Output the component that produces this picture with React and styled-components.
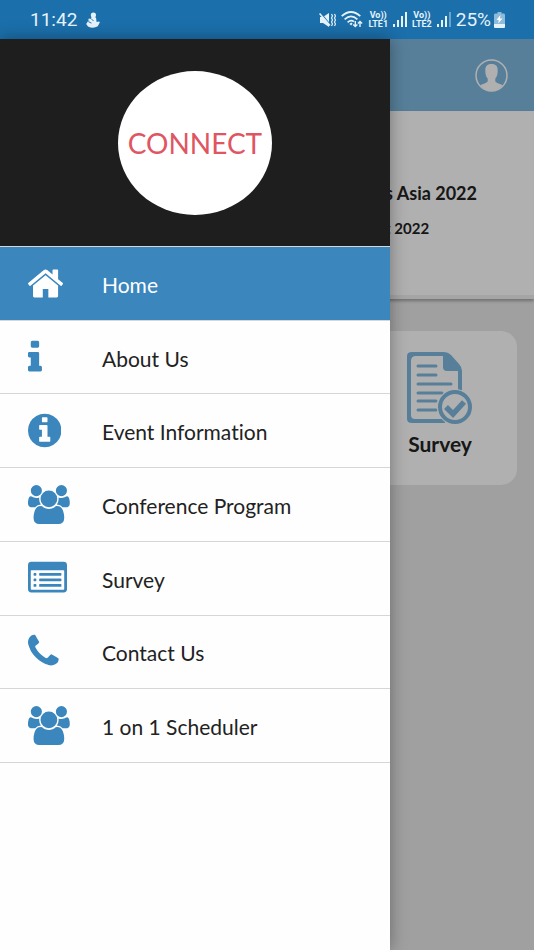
import { createGlobalStyle, styled } from "styled-components";

const GlobalStyle = createGlobalStyle`
  * {
    box-sizing: border-box;
  }

  body {
    margin: 0;
    font-family: Lato, "Liberation Sans", sans-serif;
    font-variant-ligatures: none;
    color: #222;
  }
`;

const Container = styled.div`
  display: flex;
  flex-direction: column;
  min-height: 100vh;
  background: #e8e8e8;
`;

// status bar
const StatusBar = styled.header`
  display: flex;
  align-items: center;
  justify-content: space-between;
  height: 39px;
  padding: 0 29px 0 30px;
  background: #1b6fab;
  color: #e6f3fb;
  font-family: Roboto, sans-serif;
  font-size: 19px;
`;

const StatusGroup = styled.div`
  display: flex;
  align-items: center;
  gap: ${(props) => props.$gap}px;
`;

const Carrier = styled.span`
  display: flex;
  flex-direction: column;
  align-items: center;
  font-size: 9px;
  line-height: 9px;
  font-weight: 700;
`;

// page behind the drawer
const Screen = styled.div`
  position: relative;
  flex: 1;
  display: flex;
  flex-direction: column;
`;

const AppBar = styled.div`
  display: flex;
  align-items: center;
  justify-content: flex-end;
  height: 72px;
  padding-right: 26px;
  background: #7eb8e0;
`;

const IconButton = styled.button`
  display: flex;
  padding: 0;
  border: 0;
  background: none;
`;

const Hero = styled.section`
  display: flex;
  justify-content: flex-end;
  height: 188px;
  padding: 70px 57px 0 0;
  background: #fff;
  border-bottom: 4px solid #f0f0f0;
  box-shadow: 0 2px 3px rgba(0, 0, 0, 0.3);
`;

const HeroTitle = styled.h1`
  margin: 0;
  font-size: 18px;
  line-height: 24px;
`;

const HeroDate = styled.p`
  margin: 11px 0 0;
  font-size: 15px;
  line-height: 24px;
  font-weight: 700;
`;

const TileGrid = styled.div`
  display: grid;
  grid-template-columns: repeat(3, 1fr);
  gap: 19px;
  padding: 32px 17px;
`;

const Tile = styled.a`
  grid-column: 3;
  display: flex;
  flex-direction: column;
  align-items: center;
  gap: 5px;
  height: 154px;
  padding-top: 21px;
  border-radius: 16px;
  background: #fff;
  color: #222;
  font-size: 21px;
  line-height: 28px;
  font-weight: 700;
  text-decoration: none;
`;

const Backdrop = styled.div`
  position: absolute;
  inset: 0;
  background: rgba(0, 0, 0, 0.31);
`;

// drawer
const Drawer = styled.aside`
  position: absolute;
  top: 0;
  bottom: 0;
  left: 0;
  width: 73%;
  background: #fefefe;
  box-shadow: 0 0 16px rgba(0, 0, 0, 0.35);
`;

const DrawerTop = styled.div`
  display: flex;
  align-items: center;
  justify-content: center;
  height: 208px;
  background: #1e1e1e;
  border-bottom: 1px solid #d8d8d8;
`;

const Logo = styled.div`
  display: flex;
  align-items: center;
  justify-content: center;
  width: 154px;
  height: 144px;
  border-radius: 50%;
  background: #fff;
  color: #e05562;
  font-size: 28px;
`;

const Menu = styled.nav`
  display: grid;
  grid-auto-rows: 1fr;
  height: 516px;
`;

const MenuItem = styled.a`
  display: grid;
  grid-template-columns: 74px 1fr;
  align-items: center;
  padding-left: 28px;
  border-bottom: 1px solid #d6d6d6;
  background: ${(props) => (props.$active ? "#3a86bd" : "transparent")};
  color: ${(props) => (props.$active ? "#fff" : "#222")};
  font-size: 21px;
  text-decoration: none;

  svg {
    display: block;
    height: 39px;
    fill: ${(props) => (props.$active ? "#fff" : "#3a86bd")};
  }
`;

const MenuLabel = styled.span`
  padding-top: 2px;
`;

const icons = {
  home: {
    box: "89 0 1614 1792",
    d: "M1472 992v480q0 26-19 45t-45 19h-384v-384h-256v384h-384q-26 0-45-19t-19-45v-480q0-1 .5-3t.5-3l575-474 575 474q1 2 1 6zm223-69l-62 74q-8 9-21 11h-3q-13 0-21-7l-692-577-692 577q-12 8-24 7-13-2-21-11l-62-74q-8-10-7-23.5t11-21.5l719-599q32-26 76-26t76 26l244 204v-195q0-14 9-23t23-9h192q14 0 23 9t9 23v408l219 182q10 8 11 21.5t-7 23.5z",
  },
  info: {
    box: "576 0 640 1792",
    d: "M1216 1344v128q0 26-19 45t-45 19h-512q-26 0-45-19t-19-45v-128q0-26 19-45t45-19h64v-384h-64q-26 0-45-19t-19-45v-128q0-26 19-45t45-19h384q26 0 45 19t19 45v576h64q26 0 45 19t19 45zm-128-1152v192q0 26-19 45t-45 19h-256q-26 0-45-19t-19-45v-192q0-26 19-45t45-19h256q26 0 45 19t19 45z",
  },
  infoCircle: {
    box: "128 0 1536 1792",
    d: "M1152 1376v-160q0-14-9-23t-23-9h-96v-512q0-14-9-23t-23-9h-320q-14 0-23 9t-9 23v160q0 14 9 23t23 9h96v320h-96q-14 0-23 9t-9 23v160q0 14 9 23t23 9h448q14 0 23-9t9-23zm-128-896v-160q0-14-9-23t-23-9h-192q-14 0-23 9t-9 23v160q0 14 9 23t23 9h192q14 0 23-9t9-23zm640 416q0 209-103 385.5t-279.5 279.5-385.5 103-385.5-103-279.5-279.5-103-385.5 103-385.5 279.5-279.5 385.5-103 385.5 103 279.5 279.5 103 385.5z",
  },
  users: {
    box: "0 0 1920 1792",
    d: "M593 896q-162 5-265 128h-134q-82 0-138-40.5t-56-118.5q0-353 124-353 6 0 43.5 21t97.5 42.5 119 21.5q67 0 133-23-5 37-5 66 0 139 81 256zm1071 637q0 120-73 189.5t-194 69.5h-874q-121 0-194-69.5t-73-189.5q0-53 3.5-103.5t14-109 26.5-108.5 43-97.5 62-81 85.5-53.5 111.5-20q10 0 43 21.5t73 48 107 48 135 21.5 135-21.5 107-48 73-48 43-21.5q61 0 111.5 20t85.5 53.5 62 81 43 97.5 26.5 108.5 14 109 3.5 103.5zm-1024-1277q0 106-75 181t-181 75-181-75-75-181 75-181 181-75 181 75 75 181zm704 384q0 159-112.5 271.5t-271.5 112.5-271.5-112.5-112.5-271.5 112.5-271.5 271.5-112.5 271.5 112.5 112.5 271.5zm576 225q0 78-56 118.5t-138 40.5h-134q-103-123-265-128 81-117 81-256 0-29-5-66 66 23 133 23 59 0 119-21.5t97.5-42.5 43.5-21q124 0 124 353zm-128-609q0 106-75 181t-181 75-181-75-75-181 75-181 181-75 181 75 75 181z",
  },
  list: {
    box: "0 0 1792 1792",
    d: "M160 128h1472a160 160 0 0 1 160 160v1088a160 160 0 0 1-160 160h-1472a160 160 0 0 1-160-160v-1088a160 160 0 0 1 160-160zM160 512a32 32 0 0 0-32 32v832a32 32 0 0 0 32 32h1472a32 32 0 0 0 32-32v-832a32 32 0 0 0-32-32zM288 640h64a32 32 0 0 1 32 32v64a32 32 0 0 1-32 32h-64a32 32 0 0 1-32-32v-64a32 32 0 0 1 32-32zM288 896h64a32 32 0 0 1 32 32v64a32 32 0 0 1-32 32h-64a32 32 0 0 1-32-32v-64a32 32 0 0 1 32-32zM288 1152h64a32 32 0 0 1 32 32v64a32 32 0 0 1-32 32h-64a32 32 0 0 1-32-32v-64a32 32 0 0 1 32-32zM544 640h960a32 32 0 0 1 32 32v64a32 32 0 0 1-32 32h-960a32 32 0 0 1-32-32v-64a32 32 0 0 1 32-32zM544 896h960a32 32 0 0 1 32 32v64a32 32 0 0 1-32 32h-960a32 32 0 0 1-32-32v-64a32 32 0 0 1 32-32zM544 1152h960a32 32 0 0 1 32 32v64a32 32 0 0 1-32 32h-960a32 32 0 0 1-32-32v-64a32 32 0 0 1 32-32z",
  },
  phone: {
    box: "192 0 1408 1792",
    d: "M1600 1240q0 27-10 70.5t-21 68.5q-21 50-122 106-94 51-186 51-27 0-53-3.5t-57.5-12.5-47-14.5-55.5-20.5-49-18q-98-35-175-83-127-79-264-216t-216-264q-48-77-83-175-3-9-18-49t-20.5-55.5-14.5-47-12.5-57.5-3.5-53q0-92 51-186 56-101 106-122 25-11 68.5-21t70.5-10q14 0 21 3 18 6 53 76 11 19 30 54t35 63.5 31 53.5q3 4 17.5 25t21.5 35.5 7 28.5q0 20-28.5 50t-62 55-62 53-28.5 46q0 9 5 22.5t8.5 20.5 14 24 11.5 19q76 137 174 235t235 174q2 1 19 11.5t24 14 20.5 8.5 22.5 5q18 0 46-28.5t53-62 55-62 50-28.5q14 0 28.5 7t35.5 21.5 25 17.5q25 15 53.5 31t63.5 35 54 30q70 35 76 53 3 7 3 21z",
  },
};

const menu = [
  { label: "Home", icon: "home", active: true },
  { label: "About Us", icon: "info" },
  { label: "Event Information", icon: "infoCircle" },
  { label: "Conference Program", icon: "users" },
  { label: "Survey", icon: "list" },
  { label: "Contact Us", icon: "phone" },
  { label: "1 on 1 Scheduler", icon: "users" },
];

const MenuIcon = ({ name }) => (
  <svg viewBox={icons[name].box} aria-hidden="true">
    <path fillRule="evenodd" d={icons[name].d} />
  </svg>
);

const FigureIcon = () => (
  <svg width="14" height="16" viewBox="0 0 14 16" fill="currentColor" aria-hidden="true">
    <circle cx="7.4" cy="3" r="2.6" />
    <path d="M5.5 4.5L10 5.5l.6 4.5 2.6-.6.6 1.2-2 3.6Q7 17 2 14.4L.2 12l1.6-2.4 2-.4-1.6-1 .6-1.6 2.4.4z" />
    <path d="M2.5 9.8l3 1.3M5.5 7.5l2 1" stroke="#1b6fab" strokeWidth="0.9" />
  </svg>
);

const MuteIcon = () => (
  <svg width="17" height="16" viewBox="0 0 17 16" aria-hidden="true">
    <path d="M1 5h3l6-4v14l-6-4H1z" fill="currentColor" />
    <path d="M1.5 1l10 12" stroke="#1b6fab" strokeWidth="1.2" />
    <path d="M.6 1.4L11 13.5" stroke="currentColor" strokeWidth="1.5" />
    <path
      d="M12.5 2l1 2-1 2 1 2-1 2 1 2-1 2M15.5 2l1 2-1 2 1 2-1 2 1 2-1 2"
      fill="none"
      stroke="currentColor"
      strokeWidth="1.2"
    />
  </svg>
);

const WifiIcon = () => (
  <svg width="22" height="17" viewBox="0 0 22 17" fill="none" stroke="currentColor" aria-hidden="true">
    <path d="M.7 5.2Q10 -3.2 19.3 5.2M3.6 8.3Q10 2.6 16.4 8.3M6.6 11.3Q10 8.4 13 10.6" strokeWidth="1.7" />
    <path d="M8.4 13l1.8-1.4 1.4 1-1.4 2z" fill="currentColor" stroke="none" />
    <path d="M14.3 10v5.4M12.2 13.4l2.1 2.2 2.1-2.2M19 16v-5.4M16.9 12.6l2.1-2.2 2.1 2.2" strokeWidth="1.4" />
  </svg>
);

const SignalIcon = ({ weak }) => (
  <svg width="14" height="15" viewBox="0 0 14 15" fill="currentColor" aria-hidden="true">
    <rect x="0" y="12" width="2" height="3" />
    <rect x="4" y="8" width="2" height="7" />
    <rect x="8" y="4" width="2" height="11" />
    <rect x="12" y="0" width="2" height="15" opacity={weak ? 0.4 : 1} />
  </svg>
);

const BatteryIcon = () => (
  <svg width="11" height="16" viewBox="0 0 11 16" aria-hidden="true">
    <path d="M3.5 0h4v1.6h2Q11 1.6 11 3v11.5Q11 16 9.5 16h-8Q0 16 0 14.5V3q0-1.4 1.5-1.4h2z" fill="#8dbbdc" />
    <path d="M0 12h11v2.5Q11 16 9.5 16h-8Q0 16 0 14.5z" fill="currentColor" />
    <path d="M6.4 3L2.5 8h2.3l-.6 3.600L8.5 6.6H6z" fill="#fff" />
  </svg>
);

const ProfileIcon = () => (
  <svg width="33" height="33" viewBox="0 0 33 33" aria-hidden="true">
    <circle cx="16.5" cy="16.5" r="15.5" fill="none" stroke="#fff" strokeWidth="1.5" />
    <path
      d="M16.5 5c4.6 0 6.400 2.600 6.200 6.600 0 3.400-.6 6-2.400 8v3c1 1.400 4.700 2.400 7.500 3.600A15 15 0 0 1 16.500 32 15 15 0 0 1 5.200 26.200c2.800-1.200 6.500-2.200 7.500-3.600v-3c-1.800-2-2.400-4.600-2.400-8C10.100 7.600 11.900 5 16.500 5z"
      fill="#fff"
    />
  </svg>
);

const SurveyIcon = () => (
  <svg width="66" height="73" viewBox="0 0 66 73" aria-hidden="true">
    <path
      d="M5 0h32q4 0 7 3l8 9q3 3 3 7v34h-4V19H40q-4 0-4-4V4H9Q4 4 4 9v54q0 4 4 4h30v4H5q-5 0-5-4V4q0-4 5-4z"
      fill="#7eb8e0"
    />
    <path
      d="M11 14h18M11 23h18M11 32h33M11 41h24M11 49h18M11 58h18"
      stroke="#7eb8e0"
      strokeWidth="3"
      strokeLinecap="round"
    />
    <circle cx="48" cy="55" r="18" fill="#fff" />
    <circle cx="48" cy="55" r="15" fill="none" stroke="#7eb8e0" strokeWidth="4" />
    <path d="M39 55l7 7 11-12" fill="none" stroke="#7eb8e0" strokeWidth="5.5" />
  </svg>
);

const App = () => (
  <>
    <GlobalStyle />
    <Container>
      <StatusBar>
        <StatusGroup $gap={9}>
          <span>11:42</span>
          <FigureIcon />
        </StatusGroup>
        <StatusGroup $gap={5}>
          <MuteIcon />
          <WifiIcon />
          <Carrier>
            <span>Vo))</span>
            <span>LTE1</span>
          </Carrier>
          <SignalIcon />
          <Carrier>
            <span>Vo))</span>
            <span>LTE2</span>
          </Carrier>
          <SignalIcon weak />
          <StatusGroup $gap={3}>
            <span>25%</span>
            <BatteryIcon />
          </StatusGroup>
        </StatusGroup>
      </StatusBar>

      <Screen>
        <AppBar>
          <IconButton aria-label="Profile">
            <ProfileIcon />
          </IconButton>
        </AppBar>
        <Hero>
          <div>
            <HeroTitle>s Asia 2022</HeroTitle>
            <HeroDate>t 2022</HeroDate>
          </div>
        </Hero>
        <TileGrid>
          <Tile href="#survey">
            <SurveyIcon />
            Survey
          </Tile>
        </TileGrid>

        <Backdrop />

        <Drawer>
          <DrawerTop>
            <Logo>CONNECT</Logo>
          </DrawerTop>
          <Menu>
            {menu.map((item) => (
              <MenuItem key={item.label} href="#" $active={item.active}>
                <MenuIcon name={item.icon} />
                <MenuLabel>{item.label}</MenuLabel>
              </MenuItem>
            ))}
          </Menu>
        </Drawer>
      </Screen>
    </Container>
  </>
);

export default App;
